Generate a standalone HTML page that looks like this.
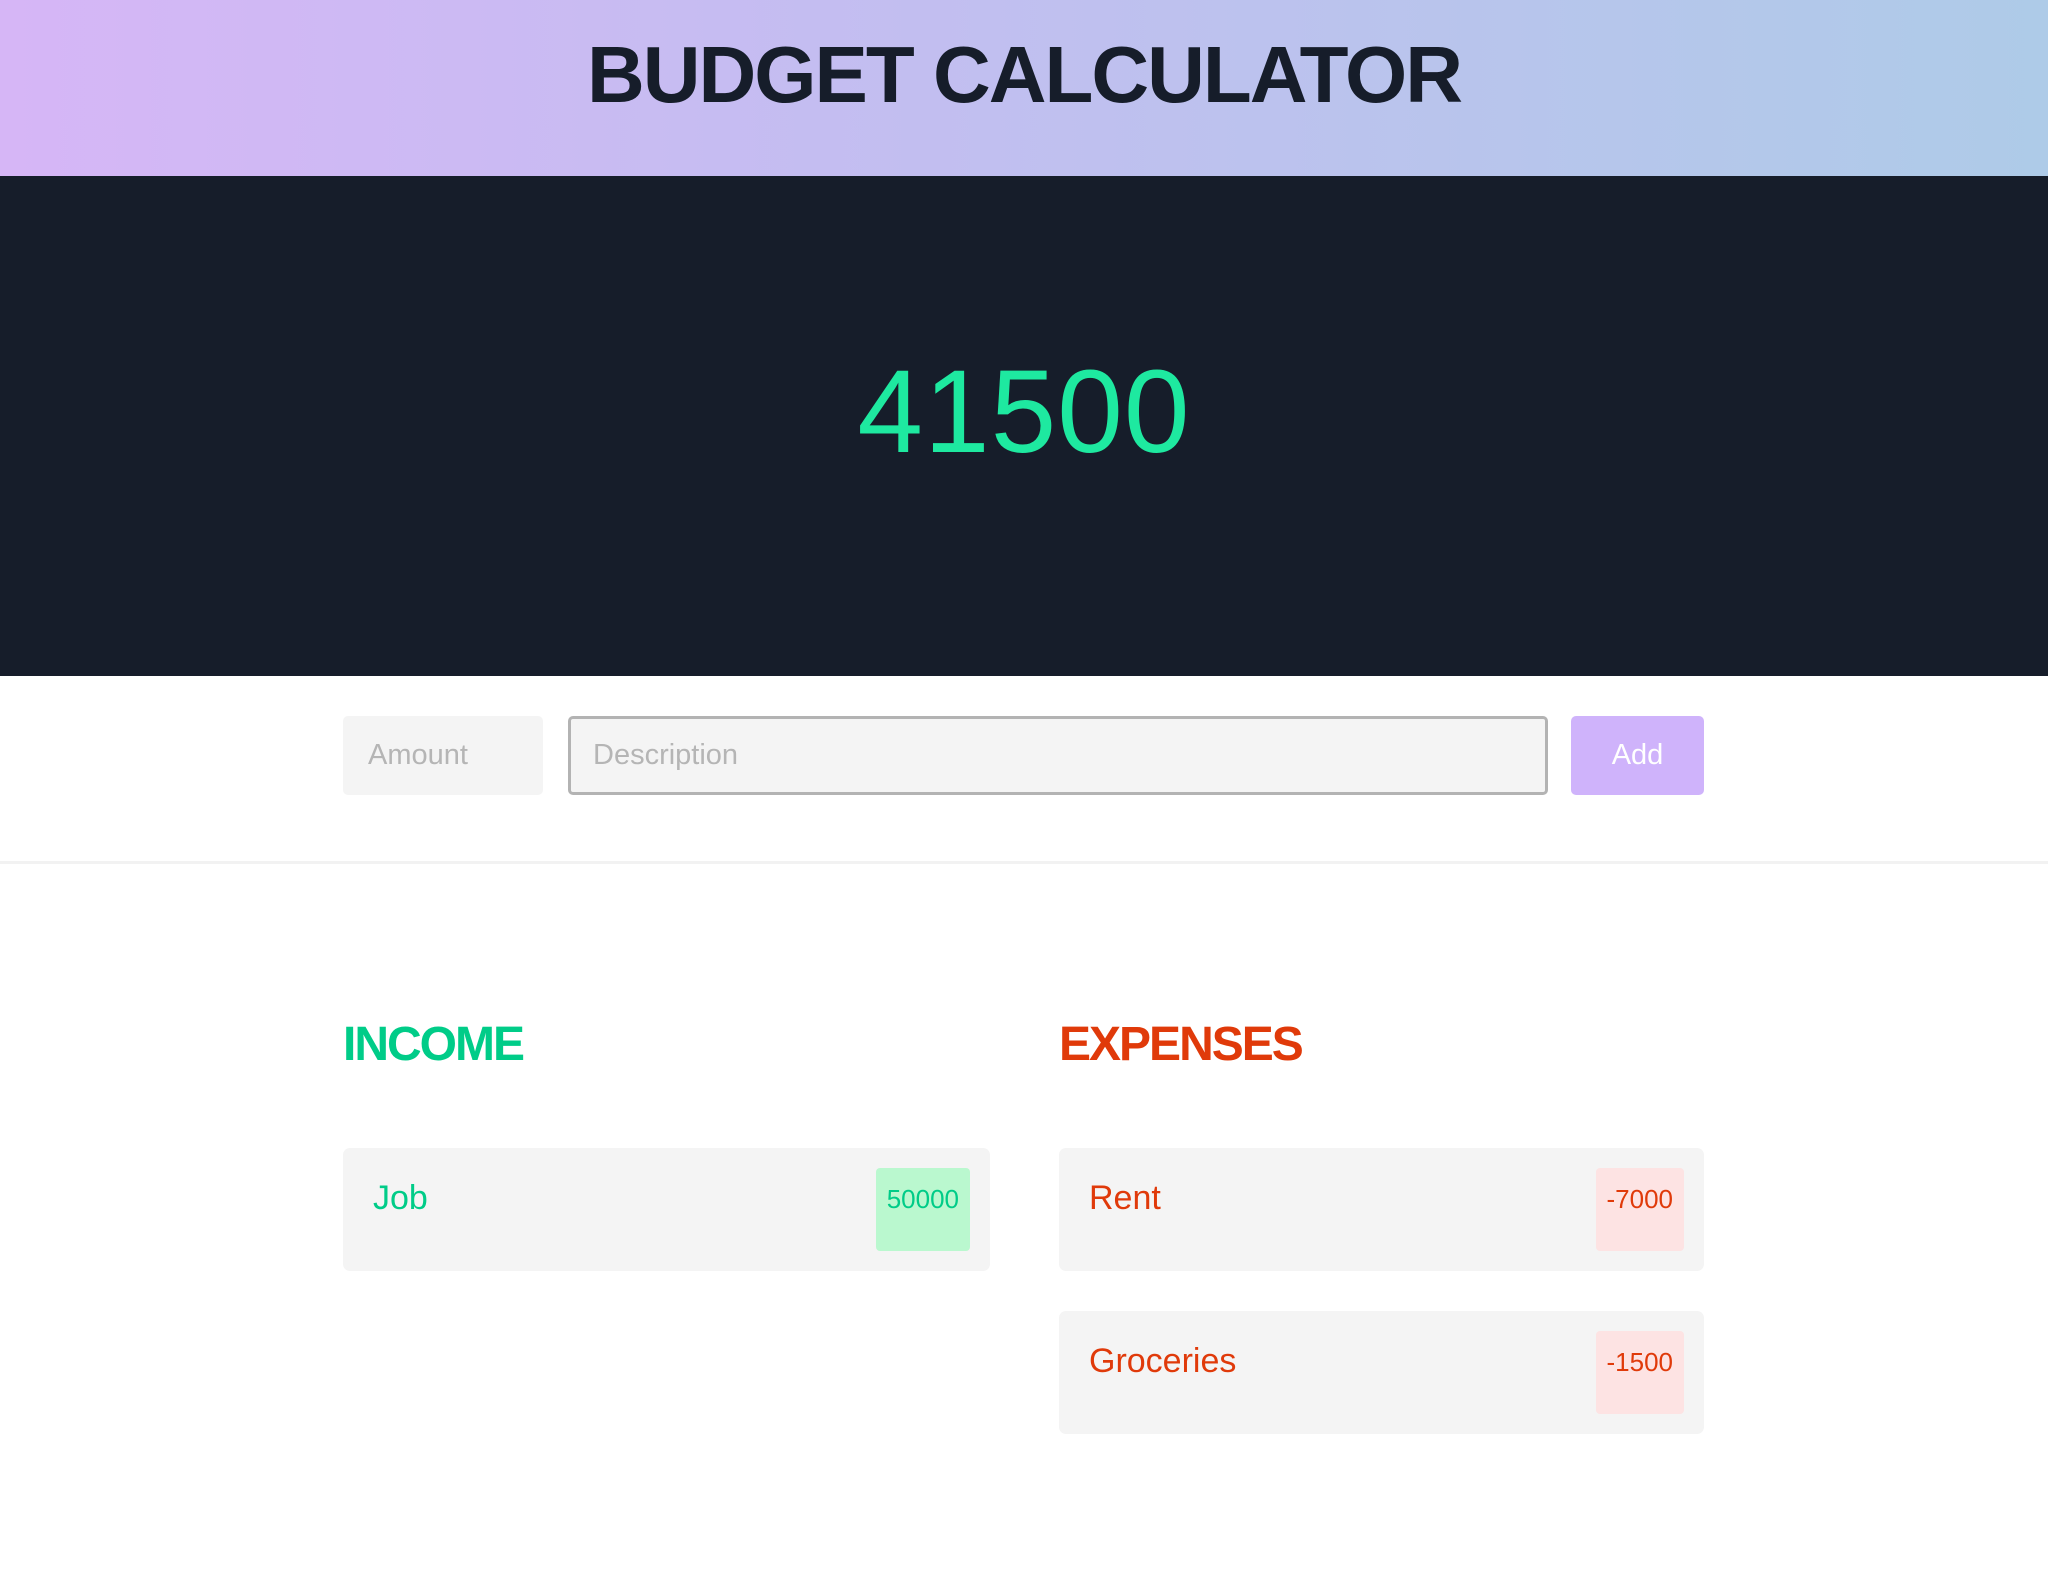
<!DOCTYPE html>
<html><head><meta charset="utf-8"><style>
*{margin:0;padding:0;box-sizing:border-box}
body{width:2048px;height:1576px;background:#fff;font-family:"Liberation Sans",sans-serif;position:relative;overflow:hidden}
.hdr{position:absolute;left:0;top:0;width:2048px;height:176px;background:linear-gradient(90deg,#d6b6f6,#c4bdf1 40%,#aecbe8);text-align:center}
.hdr h1{position:absolute;left:0;right:0;top:30px;font-size:80px;line-height:90px;font-weight:bold;color:#161d2a;letter-spacing:-2px}
.dark{position:absolute;left:0;top:176px;width:2048px;height:500px;background:#161d2a}
.num{position:absolute;left:0;right:0;top:352px;text-align:center;font-size:118px;line-height:120px;color:#1ee9a0;font-weight:300;letter-spacing:1px}
.inp{position:absolute;top:716px;height:79px;background:#f4f4f4;border-radius:5px;font-size:29px;color:#b5b5b5;line-height:79px;padding-left:25px}
.line{position:absolute;left:0;top:861px;width:2048px;height:3px;background:#f2f2f2}
h2{position:absolute;top:1012px;font-size:48px;font-weight:bold;line-height:66px;letter-spacing:-2px}
.card{position:absolute;height:123px;background:#f4f4f4;border-radius:7px}
.card .l{position:absolute;left:30px;top:31px;font-size:34px}
.card .b{position:absolute;right:20px;top:20px;height:83px;border-radius:4px;font-size:26px;padding:0 11px;line-height:62px}
</style></head><body>
<div class="hdr"><h1>BUDGET CALCULATOR</h1></div>
<div class="dark"></div>
<div class="num">41500</div>
<div class="inp" style="left:343px;width:200px">Amount</div>
<div class="inp" style="left:568px;width:980px;border:3px solid #b3b3b3;line-height:73px;padding-left:22px">Description</div>
<div class="inp" style="left:1571px;width:133px;background:#cfb3fb;color:#fff;padding:0;text-align:center">Add</div>
<div class="line"></div>
<h2 style="left:343px;color:#00cc88">INCOME</h2>
<h2 style="left:1059px;color:#e03a0a">EXPENSES</h2>
<div class="card" style="left:343px;top:1148px;width:647px"><div class="l" style="color:#00cc88">Job</div><div class="b" style="background:#baf8cf;color:#00cc88">50000</div></div>
<div class="card" style="left:1059px;top:1148px;width:645px"><div class="l" style="color:#e03a0a">Rent</div><div class="b" style="background:#fde3e3;color:#e03a0a">-7000</div></div>
<div class="card" style="left:1059px;top:1311px;width:645px"><div class="l" style="color:#e03a0a">Groceries</div><div class="b" style="background:#fde3e3;color:#e03a0a">-1500</div></div>
</body></html>
